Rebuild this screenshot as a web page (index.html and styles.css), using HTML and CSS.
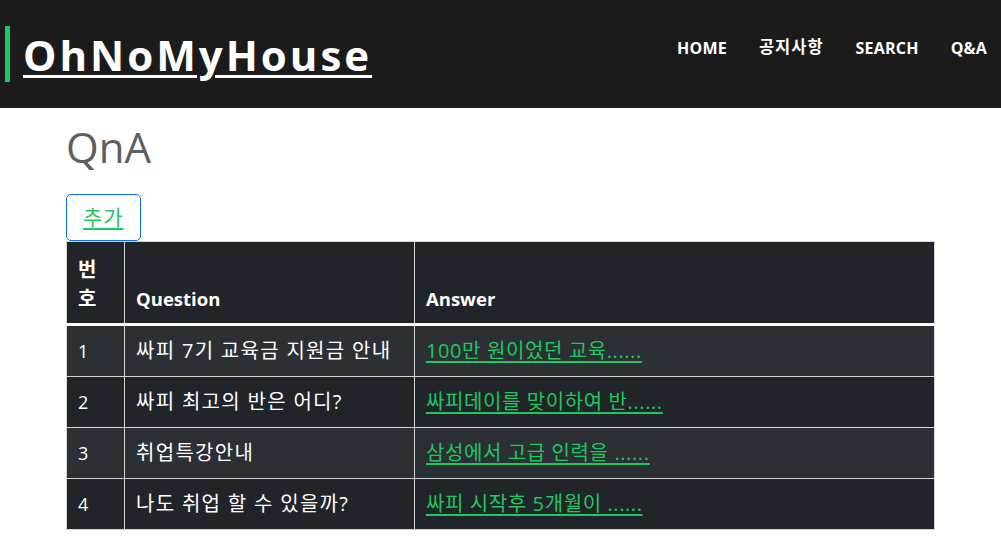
FILE: index.html
```html
<!DOCTYPE html>
<html lang="ko">
<head>
<meta charset="utf-8">
<title>OhNoMyHouse - QnA</title>
<link rel="stylesheet" href="styles.css">
</head>
<body>
<header class="topbar">
  <div class="brand">
    <span class="brand-bar"></span>
    <a class="brand-name" href="#">OhNoMyHouse</a>
  </div>
  <nav class="nav">
    <a href="#">HOME</a>
    <a class="ko" href="#">공지사항</a>
    <a href="#">SEARCH</a>
    <a href="#">Q&amp;A</a>
  </nav>
</header>
<main class="container">
  <h1 class="title">QnA</h1>
  <div class="actions"><a class="btn ko" href="#">추가</a></div>
  <table class="qna">
    <colgroup>
      <col class="c-no">
      <col class="c-q">
      <col class="c-a">
    </colgroup>
    <thead>
      <tr><th class="ko">번호</th><th>Question</th><th>Answer</th></tr>
    </thead>
    <tbody>
      <tr><td>1</td><td class="ko">싸피 7기 교육금 지원금 안내</td><td class="ko"><a href="#">100만 원이었던 교육......</a></td></tr>
      <tr><td>2</td><td class="ko">싸피 최고의 반은 어디?</td><td class="ko"><a href="#">싸피데이를 맞이하여 반......</a></td></tr>
      <tr><td>3</td><td class="ko">취업특강안내</td><td class="ko"><a href="#">삼성에서 고급 인력을 ......</a></td></tr>
      <tr><td>4</td><td class="ko">나도 취업 할 수 있을까?</td><td class="ko"><a href="#">싸피 시작후 5개월이 ......</a></td></tr>
    </tbody>
  </table>
</main>
</body>
</html>
```

FILE: styles.css
```css
* { box-sizing: border-box; }
body {
  margin: 0;
  background: #fff;
  font-family: "Open Sans", "Noto Sans CJK KR", sans-serif;
  color: #212529;
}
.topbar {
  height: 108px;
  background: #1b1b1b;
  display: flex;
  align-items: center;
  justify-content: space-between;
  padding: 0 14px 0 5px;
}
.brand {
  display: flex;
  align-items: center;
  gap: 13px;
}
.brand-bar {
  width: 5px;
  height: 56px;
  background: #1ec964;
}
.brand-name {
  color: #fff;
  font-size: 42px;
  font-weight: 700;
  letter-spacing: 3px;
  text-decoration: underline;
  text-decoration-thickness: 3px;
  text-underline-offset: 4px;
  line-height: 1;
  padding-top: 2px;
}
.nav {
  display: flex;
  align-items: center;
  gap: 32px;
  margin-top: -12px;
}
.nav a {
  color: #fff;
  font-weight: 700;
  font-size: 16px;
  line-height: 20px;
  text-decoration: none;
  letter-spacing: 0.2px;
}
.nav a.ko {
  font-size: 16.5px;
  letter-spacing: 1px;
  position: relative;
  top: -1px;
}
.container {
  width: 869px;
  margin-left: 66px;
}
.title {
  margin: 13px 0 0;
  font-size: 42px;
  font-weight: 400;
  color: #5e5e5e;
  line-height: 52px;
}
.actions {
  margin-top: 21px;
  line-height: 0;
}
.btn {
  display: inline-block;
  border: 1px solid #0d6efd;
  border-radius: 5px;
  padding: 8px 16px;
  font-size: 21px;
  line-height: 29px;
  letter-spacing: 1px;
  color: #1ec760;
  text-decoration: underline;
  text-underline-offset: 3px;
}
.qna {
  width: 100%;
  border-collapse: collapse;
  border: 1px solid #dee2e6;
  font-size: 18px;
  color: #fff;
}
.c-no { width: 58px; }
.c-q { width: 290px; }
.qna th, .qna td {
  border: 1px solid #d6d6d6;
  padding: 12px 11px;
  line-height: 26px;
  text-align: left;
}
.qna th {
  background: #212529;
  vertical-align: bottom;
  font-weight: 700;
  font-size: 18.5px;
  padding: 13px 11px 10px;
  line-height: 29px;
}
.qna th.ko {
  font-size: 20px;
  word-break: break-all;
}
.qna thead tr { border-bottom: 3px solid #fff; }
.qna td { vertical-align: middle; }
.qna td.ko {
  font-size: 20px;
  letter-spacing: 1.3px;
}
.qna tbody tr:nth-child(odd) td { background: #2c3034; }
.qna tbody tr:nth-child(even) td { background: #212529; }
.qna td a {
  color: #1ec760;
  letter-spacing: 0.6px;
  text-decoration: underline;
  text-underline-offset: 3px;
}
```
